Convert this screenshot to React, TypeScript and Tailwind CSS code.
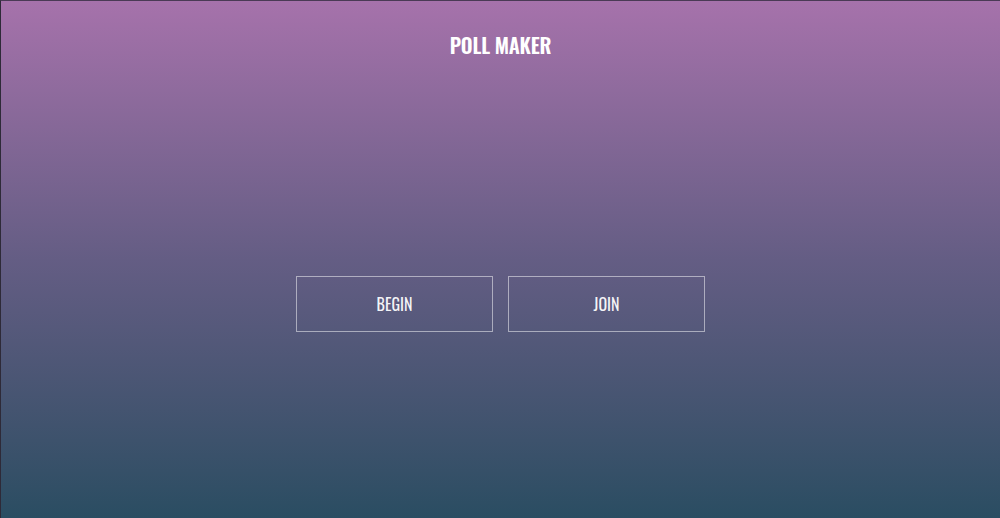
export default function App() {
  return (
    <div
      className="flex h-[518px] w-full flex-col border-l border-t border-l-[#2e2a38] border-t-[#4a3a55] bg-gradient-to-b from-[#a672ab] via-[#645d84] to-[#2a4d62] text-white"
      style={{ fontFamily: '"Oswald", "Liberation Sans Narrow", "DejaVu Sans Condensed", sans-serif' }}
    >
      <header className="flex h-[88px] items-center justify-center">
        <h1 className="text-[20.5px] font-semibold uppercase tracking-[-0.2px]">Poll Maker</h1>
      </header>
      <main className="flex flex-1 items-center justify-center gap-[15px]">
        <button className="flex h-[56px] w-[197px] items-center justify-center border border-white/50 text-[16px] uppercase text-white/95">
          Begin
        </button>
        <button className="flex h-[56px] w-[197px] items-center justify-center border border-white/50 text-[16px] uppercase text-white/95">
          Join
        </button>
      </main>
    </div>
  );
}
